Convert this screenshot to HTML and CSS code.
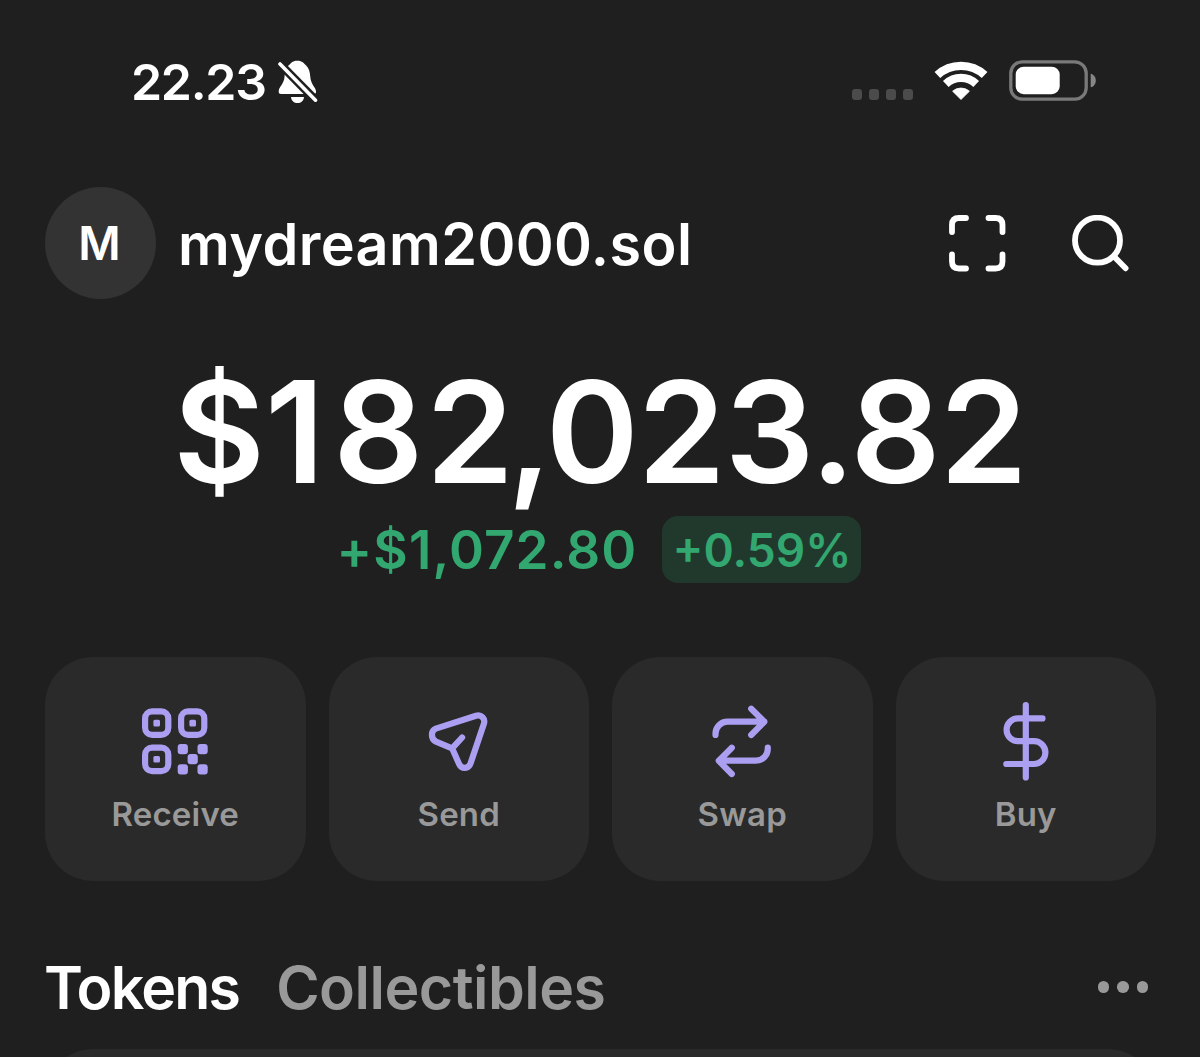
FILE: index.html
```html
<!DOCTYPE html>
<html lang="en">
<head>
  <meta charset="UTF-8" />
  <meta name="viewport" content="width=device-width, initial-scale=1" />
  <title>Wallet</title>
  <link rel="stylesheet" href="styles.css">
</head>
<body>

  <div class="status-bar">
    <span class="time">22.23</span>
    <svg class="bell" width="40" height="44" viewBox="0 0 40 44">
      <path d="M19.3 0.7C14 0.7 13 3.5 11 5C7.5 8 7 12 6.5 17C6 24 0.7 27 0.7 31.5C0.7 33.3 1.5 34 3 34H36C37.5 34 38.3 33 38 31C37.3 27 32.8 24 32.3 17C32 12 31 8 27.7 5C26 3.5 24.5 0.7 19.3 0.7Z" fill="#fff"/>
      <path d="M13 37H26C25.5 41 23 43 19.5 43S13.5 41 13 37Z" fill="#fff"/>
      <path d="M-1 1L41 43.7" stroke="#1f1f1f" stroke-width="8.5"/>
      <path d="M2 4L37.5 40.2" stroke="#fff" stroke-width="3.6" stroke-linecap="round"/>
    </svg>
    <div class="signal"><i></i><i></i><i></i><i></i></div>
    <svg class="wifi" width="54" height="40" viewBox="0 0 54 40">
      <g fill="none" stroke="#fff">
        <path d="M3.4 15A35 35 0 0 1 50.6 15" stroke-width="8.4"/>
        <path d="M11.8 24A22 22 0 0 1 42.2 24" stroke-width="8.2"/>
      </g>
      <path d="M27 39.5L18.6 31.2A12.7 12.7 0 0 1 35.4 31.2Z" fill="#fff" stroke="#fff" stroke-width="0.8" stroke-linejoin="round"/>
    </svg>
    <svg class="battery" width="88" height="41" viewBox="0 0 88 41">
      <rect x="1.8" y="1.8" width="75.4" height="37.4" rx="11.5" fill="none" stroke="#797979" stroke-width="3.3"/>
      <rect x="6.7" y="6.7" width="44" height="27.5" rx="8" fill="#fff"/>
      <path d="M81.7 13.7C88.5 15 88.5 26 81.7 27.3Z" fill="#868686"/>
    </svg>
  </div>

  <div class="header">
    <div class="avatar">M</div>
    <div class="account">mydream2000.sol</div>
    <svg class="scan" width="57" height="57" viewBox="0 0 57 57">
      <path d="M3 17V10Q3 3 10 3H17M39.5 3H46.5Q53.5 3 53.5 10V17M53.5 39.5V46.5Q53.5 53.5 46.5 53.5H39.5M17 53.5H10Q3 53.5 3 46.5V39.5"/>
    </svg>
    <svg class="search" width="57" height="57" viewBox="0 0 57 57">
      <circle cx="25.5" cy="25.2" r="22.5"/>
      <path d="M42 41.5L53.6 53.3"/>
    </svg>
  </div>

  <div class="balance">$<span class="wide">1</span><span class="loose">8</span><span class="tight">2,</span><span class="snug">023.82</span></div>
  <div class="change">
    <span class="gain">+$1,072.80</span>
    <span class="percent">+0.59%</span>
  </div>

  <div class="actions">
    <div class="action">
      <svg class="qr" width="80" height="80" viewBox="0 0 80 80">
        <g class="line">
          <rect x="10.1" y="10.4" width="23.2" height="23.4" rx="7"/>
          <rect x="46.1" y="10.4" width="23.2" height="23.4" rx="7"/>
          <rect x="10.1" y="46.7" width="23.2" height="23.4" rx="7"/>
        </g>
        <g class="fill">
          <rect x="18.4" y="18.8" width="6.6" height="6.6" rx="1.5"/>
          <rect x="54.4" y="18.8" width="6.6" height="6.6" rx="1.5"/>
          <rect x="18.4" y="55" width="6.6" height="6.6" rx="1.5"/>
          <rect x="42.7" y="43" width="10.2" height="10.2" rx="3"/>
          <rect x="62.5" y="43" width="10.2" height="10.2" rx="3"/>
          <rect x="52.6" y="53.1" width="10.2" height="10.2" rx="3"/>
          <rect x="42.7" y="63.2" width="10.2" height="10.2" rx="3"/>
          <rect x="62.5" y="63.2" width="10.2" height="10.2" rx="3"/>
        </g>
      </svg>
      <span>Receive</span>
    </div>
    <div class="action">
      <svg width="80" height="80" viewBox="0 0 80 80">
        <path class="line" d="M16.8 27.6L57 14.8C62.2 13.2 66.6 17.6 64.9 22.8L51.6 62.3C49.6 68.2 42.5 68.4 40.1 63L33.1 47.3L17 40.6C11.6 38 11.6 29.6 16.8 27.6ZM33.1 47.3L43.1 36.5"/>
      </svg>
      <span>Send</span>
    </div>
    <div class="action">
      <svg width="80" height="80" viewBox="0 0 80 80">
        <path class="line" d="M13.5 34V32.7A12 12 0 0 1 25.5 20.7H62.3M49.2 7.7L62.3 20.8L49.2 34M65.8 46.7V47.7A12 12 0 0 1 53.8 59.7H17M29.8 46.7L16.8 59.8L29.8 73"/>
      </svg>
      <span>Swap</span>
    </div>
    <div class="action">
      <svg width="80" height="80" viewBox="0 0 80 80">
        <path class="line" d="M39.8 4V76.5M56.5 17.4H32A11.4 11.4 0 0 0 32 40.2H48A11.4 11.4 0 0 1 48 63H20.3"/>
      </svg>
      <span>Buy</span>
    </div>
  </div>

  <div class="tabs">
    <span class="tab active">Tokens</span>
    <span class="tab">Collectibles</span>
    <div class="more"><i></i><i></i><i></i></div>
  </div>

  <svg class="token-list" width="1111" height="8" viewBox="0 0 1111 8">
    <rect width="1111" height="120" rx="48" fill="#2a2a2a"/>
  </svg>

</body>
</html>
```

FILE: styles.css
```css
body {
  margin: 0;
  height: 1057px;
  overflow: hidden;
  background: #1f1f1f;
  color: #fff;
  font-family: Inter, "Liberation Sans", sans-serif;
  font-weight: 600;
  white-space: nowrap;
}
svg {
  display: block;
  flex-shrink: 0;
}
.status-bar {
  display: flex;
  align-items: center;
  height: 164px;
  padding: 0 103px 0 131px;
}
.time {
  width: 147px;
  font-size: 50px;
  letter-spacing: -1.3px;
}
.signal {
  display: flex;
  gap: 6.7px;
  margin: 25px 21px 0 auto;
}
.signal i {
  width: 10.2px;
  height: 11px;
  border-radius: 3px;
  background: #4b4b4b;
}
.wifi {
  margin: -4px 21px 0 0;
}
.battery {
  margin-top: -3px;
}
.header {
  display: flex;
  align-items: center;
  height: 158px;
  padding: 0 71px 0 45px;
}
.avatar {
  width: 111px;
  height: 112px;
  margin-right: 22px;
  border-radius: 50%;
  background: #333;
  font-size: 46px;
  line-height: 112px;
  text-align: center;
  text-indent: -2px;
}
.account {
  padding-top: 2px;
  font-size: 57.5px;
  line-height: 70px;
  letter-spacing: 0.4px;
}
.scan {
  margin: 0 66px 0 auto;
}
.scan, .search {
  fill: none;
  stroke: #fff;
  stroke-width: 5.8px;
  stroke-linecap: round;
}
.balance {
  height: 194px;
  padding-top: 25px;
  box-sizing: border-box;
  font-size: 141px;
  line-height: 170px;
  text-align: center;
}
.wide {
  letter-spacing: 8.5px;
}
.loose {
  letter-spacing: 2.5px;
}
.tight {
  letter-spacing: -6.5px;
}
.snug {
  letter-spacing: -1px;
}
.change {
  display: flex;
  justify-content: center;
  align-items: center;
  gap: 25px;
  height: 67px;
  margin-right: 2px;
  color: #32a770;
}
.gain {
  font-size: 53px;
  letter-spacing: 1.1px;
}
.percent {
  width: 199px;
  height: 67px;
  border-radius: 16px;
  background: #21392d;
  font-size: 46px;
  line-height: 69px;
  text-align: center;
}
.actions {
  display: grid;
  grid-template-columns: repeat(4, 1fr);
  gap: 23px;
  margin: 74px 44px 0 45px;
}
.action {
  display: flex;
  flex-direction: column;
  align-items: center;
  height: 224px;
  padding-top: 44px;
  box-sizing: border-box;
  border-radius: 48px;
  background: #2a2a2a;
  color: #999;
  font-size: 33px;
  line-height: 40px;
  letter-spacing: 0.2px;
}
.action span {
  margin-top: 13px;
}
.line {
  fill: none;
  stroke: #ab9ff2;
  stroke-width: 6.2px;
  stroke-linecap: round;
  stroke-linejoin: round;
}
.fill {
  fill: #ab9ff2;
}
.tabs {
  display: flex;
  align-items: center;
  height: 80px;
  margin-top: 66px;
  padding: 0 52px 0 44px;
}
.tab {
  margin-right: 37px;
  color: #999;
  font-size: 59px;
  letter-spacing: -0.5px;
}
.tab.active {
  color: #fff;
  letter-spacing: -1.8px;
}
.more {
  display: flex;
  gap: 8px;
  margin-left: auto;
}
.more i {
  width: 11.5px;
  height: 11.5px;
  border-radius: 50%;
  background: #999;
}
.token-list {
  margin: 22px 0 0 45px;
  overflow: hidden;
}
```
